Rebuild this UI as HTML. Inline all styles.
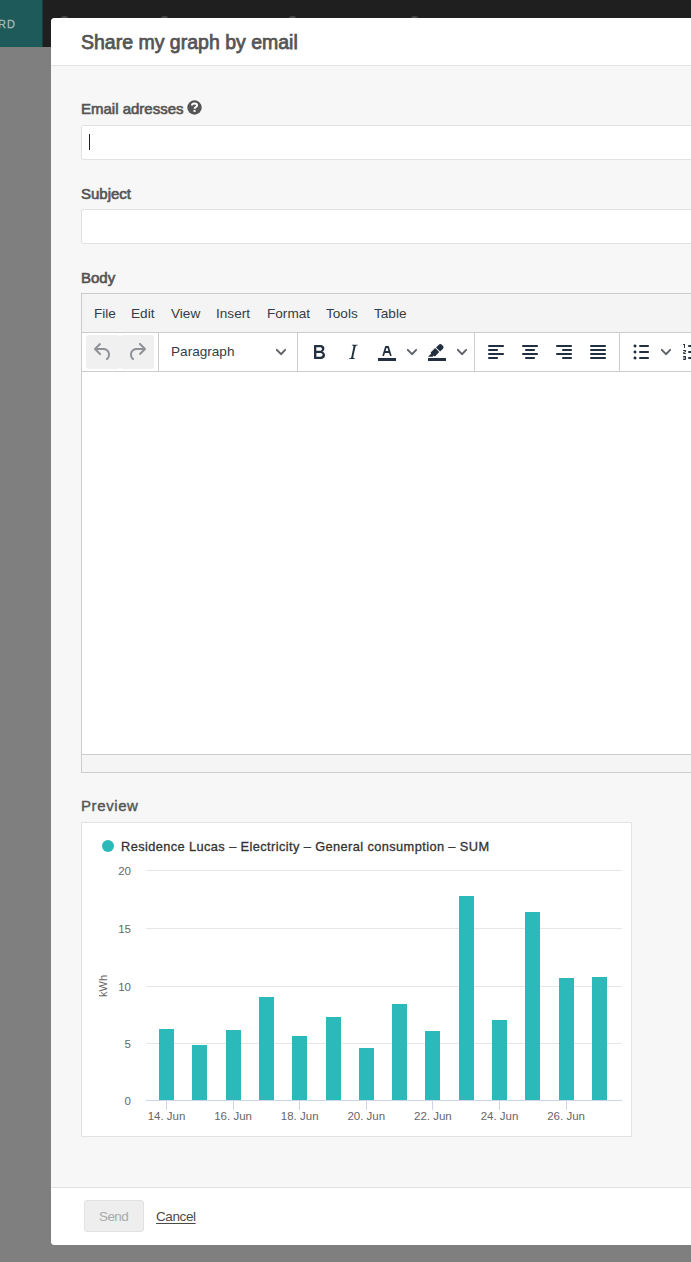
<!DOCTYPE html>
<html><head><meta charset="utf-8">
<style>
*{box-sizing:border-box;margin:0;padding:0}
html,body{width:691px;height:1262px;overflow:hidden;background:#7f7f7f;font-family:"Liberation Sans",sans-serif;position:relative}
.a{position:absolute}
#topbar{left:0;top:0;width:691px;height:47px;background:#1f1f1f}
#teal{left:0;top:0;width:43px;height:47px;background:#1d5a59;border-right:1px solid #173e3e}
#rd{left:-2px;top:18px;font-size:11px;line-height:12px;color:#a3bcbb;letter-spacing:1px;font-weight:normal;-webkit-text-stroke:0.3px #a3bcbb}
#modal{left:51px;top:18px;width:700px;height:1227px;background:#f7f7f7;border-radius:4px;overflow:hidden}
#hdr{left:51px;top:18px;width:700px;height:48px;background:#fff;border-bottom:1px solid #e2e2e8;border-radius:4px 0 0 0}
#title{left:81px;top:32px;font-size:19.5px;line-height:20px;font-weight:normal;-webkit-text-stroke:0.75px #555;color:#555;white-space:nowrap;letter-spacing:0px}
.lbl{font-size:15px;line-height:16px;font-weight:normal;-webkit-text-stroke:0.65px #555;color:#555;white-space:nowrap}
.inp{background:#fff;border:1px solid #e2e2e2;border-radius:2px;width:700px;height:35px;left:81px}
#ftr{left:51px;top:1187px;width:700px;height:58px;background:#fff;border-top:1px solid #e2e2e2;border-radius:0 0 0 4px}
#editor{left:81px;top:293px;width:700px;height:480px;border:1px solid #ccc;background:#fff}
#menubar{left:82px;top:294px;width:700px;height:39px;background:#f4f4f4;border-bottom:1px solid #ccc}
.mi{top:306px;font-size:13.6px;line-height:16px;color:#353c45;white-space:nowrap}
#toolbar{left:82px;top:333px;width:700px;height:39px;background:#fff;border-bottom:1px solid #ccc}
.sep{top:333px;width:1px;height:38px;background:#ccc}
#status{left:82px;top:754px;width:700px;height:18px;background:#f5f5f5;border-top:1px solid #ccc}
.btnbg{top:335px;width:34px;height:34px;background:#f0f0f0;border-radius:3px}
svg.ic{position:absolute;width:24px;height:24px;top:340px;fill:#222f3e}
svg.ch{position:absolute;width:10px;height:10px;top:347px;fill:#5a5e64;stroke:#5a5e64;stroke-width:0.3px}
</style></head>
<body>
<div id="topbar" class="a"></div>
<div id="teal" class="a"></div>
<div id="rd" class="a">RD</div>
<div class="a" style="left:61px;top:16px;width:7px;height:4px;border-radius:50%;background:#4a4a4a"></div>
<div class="a" style="left:161px;top:16px;width:7px;height:4px;border-radius:50%;background:#4a4a4a"></div>
<div class="a" style="left:289px;top:16px;width:7px;height:4px;border-radius:50%;background:#4a4a4a"></div>
<div class="a" style="left:411px;top:16px;width:7px;height:4px;border-radius:50%;background:#4a4a4a"></div>
<div id="modal" class="a"></div>
<div id="hdr" class="a"></div>
<div id="title" class="a">Share my graph by email</div>

<div class="a lbl" style="left:81px;top:101px">Email adresses</div>
<svg class="a" style="left:187px;top:100px" width="15" height="15" viewBox="0 0 15 15"><circle cx="7.5" cy="7.5" r="7.2" fill="#555"/><path d="M5 5.6C5 4.2 6.1 3.4 7.5 3.4S10.1 4.3 10.1 5.5C10.1 6.9 7.6 7.2 7.6 8.7" fill="none" stroke="#fff" stroke-width="2"/><rect x="6.5" y="9.9" width="2.1" height="2" fill="#fff"/></svg>
<div class="a inp" style="top:125px"></div>
<div class="a" style="left:89px;top:134px;width:1px;height:16px;background:#222"></div>
<div class="a lbl" style="left:81px;top:186px">Subject</div>
<div class="a inp" style="top:209px"></div>
<div class="a lbl" style="left:81px;top:270px">Body</div>

<div id="editor" class="a"></div>
<div id="menubar" class="a"></div>
<div class="a mi" style="left:94px">File</div>
<div class="a mi" style="left:131px">Edit</div>
<div class="a mi" style="left:171px">View</div>
<div class="a mi" style="left:216px">Insert</div>
<div class="a mi" style="left:267px">Format</div>
<div class="a mi" style="left:326px">Tools</div>
<div class="a mi" style="left:374px">Table</div>
<div id="toolbar" class="a"></div>
<div class="a sep" style="left:158px"></div>
<div class="a sep" style="left:297px"></div>
<div class="a sep" style="left:474px"></div>
<div class="a sep" style="left:619px"></div>

<div class="a btnbg" style="left:86px"></div>
<div class="a btnbg" style="left:120px"></div>
<svg class="ic" style="left:91px;fill:#8e9196" viewBox="0 0 24 24"><path d="M6.4 8H12c3.7 0 6.2 2 6.8 5.1.6 2.7-.4 5.6-2.3 6.8a1 1 0 0 1-1-1.8c1.1-.6 1.8-2.7 1.4-4.6-.5-2.1-2.1-3.5-4.9-3.5H6.4l3.3 3.3a1 1 0 1 1-1.4 1.4l-5-5a1 1 0 0 1 0-1.4l5-5a1 1 0 0 1 1.4 1.4L6.4 8z"/></svg>
<svg class="ic" style="left:125px;fill:#8e9196" viewBox="0 0 24 24"><path d="M17.6 10H12c-2.8 0-4.4 1.4-4.9 3.5-.4 2 .3 4 1.4 4.6a1 1 0 1 1-1 1.8c-2-1.2-2.9-4.1-2.3-6.8.6-3 3-5.1 6.8-5.1h5.6l-3.3-3.3a1 1 0 1 1 1.4-1.4l5 5a1 1 0 0 1 0 1.4l-5 5a1 1 0 0 1-1.4-1.4l3.3-3.3z"/></svg>
<div class="a mi" style="left:171px;top:344px;font-size:13.6px">Paragraph</div>
<svg class="ch" style="left:276px" viewBox="0 0 10 10"><path d="M8.7 2.2c.3-.3.8-.3 1 0 .4.4.4.9 0 1.2L5.7 7.8c-.3.3-.9.3-1.2 0L.2 3.4a.8.8 0 0 1 0-1.2c.3-.3.8-.3 1.1 0L5 6l3.7-3.8z"/></svg>
<svg class="ic" style="left:307px" viewBox="0 0 24 24"><path d="M7.8 19c-.3 0-.5 0-.6-.2l-.2-.5V5.7c0-.2 0-.4.2-.5l.6-.2h5c1.5 0 2.7.3 3.5 1 .7.6 1.1 1.4 1.1 2.5a3 3 0 0 1-.6 1.9c-.4.6-1 1-1.6 1.2.4.1.9.3 1.300.6s.8.7 1 1.2c.4.4.5 1 .5 1.6 0 1.3-.4 2.300-1.300 3-.8.7-2.100 1-3.800 1H7.8zm5-8.3c.6 0 1.2-.1 1.6-.5.4-.3.6-.7.6-1.3 0-1.1-.8-1.7-2.3-1.7H9.3v3.5h3.4zm.5 6c.7 0 1.3-.1 1.7-.4.4-.4.6-.9.6-1.5s-.2-1-.7-1.4c-.4-.3-1-.4-2-.4H9.4v3.8h4z" fill-rule="evenodd"/></svg>
<svg class="ic" style="left:341px" viewBox="0 0 24 24"><path d="M16.7 4.7l-.1.9h-.3c-.6 0-1 0-1.4.3-.3.3-.4.6-.5 1.1l-2.1 9.8v.6c0 .5.4.8 1.4.8h.2l-.2.8H8l.2-.8h.2c1.1 0 1.8-.5 2-1.5l2-9.8.1-.5c0-.6-.4-.8-1.4-.8h-.3l.2-.9h5.8z" fill-rule="evenodd"/></svg>
<svg class="ic" style="left:375px" viewBox="0 0 24 24"><g fill-rule="evenodd"><path d="M3 18h18v3H3z"/><path d="M8.7 16h-.8a.5.5 0 0 1-.5-.6l2.7-9c.1-.3.3-.4.5-.4h2.8c.2 0 .4.1.5.4l2.7 9a.5.5 0 0 1-.5.6h-.8a.5.5 0 0 1-.4-.4l-.7-2.2c0-.3-.3-.4-.5-.4h-3.4c-.2 0-.4.1-.5.4l-.7 2.2c0 .3-.2.4-.4.4zm2.600-7.600l-.6 2a.5.5 0 0 0 .5.6h1.6a.5.5 0 0 0 .5-.6l-.6-2c0-.3-.3-.4-.5-.4h-.4c-.2 0-.4.1-.5.4z"/></g></svg>
<svg class="ch" style="left:407px" viewBox="0 0 10 10"><path d="M8.7 2.2c.3-.3.8-.3 1 0 .4.4.4.9 0 1.2L5.7 7.8c-.3.3-.9.3-1.2 0L.2 3.4a.8.8 0 0 1 0-1.2c.3-.3.8-.3 1.1 0L5 6l3.7-3.8z"/></svg>
<svg class="ic" style="left:425px" viewBox="0 0 24 24"><g fill-rule="evenodd"><path d="M3 18h18v3H3z"/><path fill-rule="nonzero" d="M7.7 16.7H3l3.3-3.3-.7-.8L10.2 8l4 4.1-4 4.2c-.2.2-.6.2-.8 0l-.6-.7-1.1 1.1zm5-7.5L11 7.4l3-2.9a2 2 0 0 1 2.6 0L18 6c.7.7.7 2 0 2.7l-2.9 2.9-1.8-1.8-.5-.6"/></g></svg>
<svg class="ch" style="left:457px" viewBox="0 0 10 10"><path d="M8.7 2.2c.3-.3.8-.3 1 0 .4.4.4.9 0 1.2L5.7 7.8c-.3.3-.9.3-1.2 0L.2 3.4a.8.8 0 0 1 0-1.2c.3-.3.8-.3 1.1 0L5 6l3.7-3.8z"/></svg>
<svg class="ic" style="left:484px" viewBox="0 0 24 24"><path d="M5 5h14c.6 0 1 .4 1 1s-.4 1-1 1H5a1 1 0 1 1 0-2zm0 4h8c.6 0 1 .4 1 1s-.4 1-1 1H5a1 1 0 1 1 0-2zm0 8h8c.6 0 1 .4 1 1s-.4 1-1 1H5a1 1 0 0 1 0-2zm0-4h14c.6 0 1 .4 1 1s-.4 1-1 1H5a1 1 0 0 1 0-2z"/></svg>
<svg class="ic" style="left:518px" viewBox="0 0 24 24"><path d="M5 5h14c.6 0 1 .4 1 1s-.4 1-1 1H5a1 1 0 1 1 0-2zm3 4h8c.6 0 1 .4 1 1s-.4 1-1 1H8a1 1 0 1 1 0-2zm0 8h8c.6 0 1 .4 1 1s-.4 1-1 1H8a1 1 0 0 1 0-2zm-3-4h14c.6 0 1 .4 1 1s-.4 1-1 1H5a1 1 0 0 1 0-2z"/></svg>
<svg class="ic" style="left:552px" viewBox="0 0 24 24"><path d="M5 5h14c.6 0 1 .4 1 1s-.4 1-1 1H5a1 1 0 1 1 0-2zm6 4h8c.6 0 1 .4 1 1s-.4 1-1 1h-8a1 1 0 0 1 0-2zm0 8h8c.6 0 1 .4 1 1s-.4 1-1 1h-8a1 1 0 0 1 0-2zm-6-4h14c.6 0 1 .4 1 1s-.4 1-1 1H5a1 1 0 0 1 0-2z"/></svg>
<svg class="ic" style="left:586px" viewBox="0 0 24 24"><path d="M5 5h14c.6 0 1 .4 1 1s-.4 1-1 1H5a1 1 0 1 1 0-2zm0 4h14c.6 0 1 .4 1 1s-.4 1-1 1H5a1 1 0 1 1 0-2zm0 4h14c.6 0 1 .4 1 1s-.4 1-1 1H5a1 1 0 0 1 0-2zm0 4h14c.6 0 1 .4 1 1s-.4 1-1 1H5a1 1 0 0 1 0-2z"/></svg>
<svg class="ic" style="left:629px" viewBox="0 0 24 24"><path d="M11 5h8c.6 0 1 .4 1 1s-.4 1-1 1h-8a1 1 0 0 1 0-2zm0 6h8c.6 0 1 .4 1 1s-.4 1-1 1h-8a1 1 0 0 1 0-2zm0 6h8c.6 0 1 .4 1 1s-.4 1-1 1h-8a1 1 0 0 1 0-2zM4.5 6c0-.4.1-.8.4-1 .3-.4.7-.5 1.1-.5.4 0 .8.1 1 .4.4.3.5.7.5 1.1 0 .4-.1.8-.4 1-.3.4-.7.5-1.1.5-.4 0-.8-.1-1-.4-.4-.3-.5-.7-.5-1.1zm0 6c0-.4.1-.8.4-1 .3-.4.7-.5 1.1-.5.4 0 .8.1 1 .4.4.3.5.7.5 1.1 0 .4-.1.8-.4 1-.3.4-.7.5-1.1.5-.4 0-.8-.1-1-.4-.4-.3-.5-.7-.5-1.1zm0 6c0-.4.1-.8.4-1 .3-.4.7-.5 1.1-.5.4 0 .8.1 1 .4.4.3.5.7.5 1.1 0 .4-.1.8-.4 1-.3.4-.7.5-1.1.5-.4 0-.8-.1-1-.4-.4-.3-.5-.7-.5-1.1z"/></svg>
<svg class="ch" style="left:661px" viewBox="0 0 10 10"><path d="M8.7 2.2c.3-.3.8-.3 1 0 .4.4.4.9 0 1.2L5.7 7.8c-.3.3-.9.3-1.2 0L.2 3.4a.8.8 0 0 1 0-1.2c.3-.3.8-.3 1.1 0L5 6l3.7-3.8z"/></svg>
<svg class="ic" style="left:679px" viewBox="0 0 24 24"><path d="M10 17h8c.6 0 1 .4 1 1s-.4 1-1 1h-8a1 1 0 0 1 0-2zm0-6h8c.6 0 1 .4 1 1s-.4 1-1 1h-8a1 1 0 0 1 0-2zm0-6h8c.6 0 1 .4 1 1s-.4 1-1 1h-8a1 1 0 1 1 0-2zM6 4v3.5c0 .3-.2.5-.5.5a.5.5 0 0 1-.5-.5V5h-.5a.5.5 0 0 1 0-1H6zm-1 8.8l.2.2h1.3c.3 0 .5.2.5.5s-.2.5-.5.5H4.9a1 1 0 0 1-.9-1V13c0-.4.3-.8.6-1l1.2-.4.2-.3a.2.2 0 0 0-.2-.2H4.5a.5.5 0 0 1-.5-.5c0-.3.2-.5.5-.5h1.6c.5 0 .9.4.9 1v.1c0 .4-.3.8-.6 1l-1.200.4-.2.3zM7 17v2c0 .6-.4 1-1 1H4.5a.5.5 0 0 1 0-1h1.2c.2 0 .3-.1.3-.3 0-.2-.1-.3-.3-.3H4.4a.4.4 0 1 1 0-.8h1.3c.2 0 .3-.1.3-.3 0-.2-.1-.3-.3-.3H4.5a.5.5 0 1 1 0-1H6c.6 0 1 .4 1 1z" fill-rule="evenodd"/></svg>
<div id="status" class="a"></div>

<div class="a lbl" style="left:81px;top:798px;letter-spacing:0.6px;-webkit-text-stroke:0.4px #555">Preview</div>


<div class="a" style="left:81px;top:822px;width:551px;height:315px;background:#fff;border:1px solid #e3e3e3"></div>
<svg class="a" style="left:0;top:0" width="691" height="1262" viewBox="0 0 691 1262">
<g fill="#e6e6e6"><rect x="146" y="870" width="476" height="1"/><rect x="146" y="928" width="476" height="1"/><rect x="146" y="986" width="476" height="1"/><rect x="146" y="1043" width="476" height="1"/></g>
<rect x="146" y="1100" width="476" height="1" fill="#ccd6eb"/>
<g fill="#ccd6eb"><rect x="166" y="1101" width="1" height="9"/><rect x="233" y="1101" width="1" height="9"/><rect x="299" y="1101" width="1" height="9"/><rect x="366" y="1101" width="1" height="9"/><rect x="432" y="1101" width="1" height="9"/><rect x="499" y="1101" width="1" height="9"/><rect x="566" y="1101" width="1" height="9"/></g>
<g fill="#2cb9b9"><rect x="159" y="1029" width="15" height="71"/><rect x="192" y="1045" width="15" height="55"/><rect x="226" y="1030" width="15" height="70"/><rect x="259" y="997" width="15" height="103"/><rect x="292" y="1036" width="15" height="64"/><rect x="326" y="1017" width="15" height="83"/><rect x="359" y="1048" width="15" height="52"/><rect x="392" y="1004" width="15" height="96"/><rect x="425" y="1031" width="15" height="69"/><rect x="459" y="896" width="15" height="204"/><rect x="492" y="1020" width="15" height="80"/><rect x="525" y="912" width="15" height="188"/><rect x="559" y="978" width="15" height="122"/><rect x="592" y="977" width="15" height="123"/></g>
<circle cx="108" cy="846" r="6" fill="#2cb9b9"/>
<text x="121" y="851" font-family="Liberation Sans" font-size="12.8" letter-spacing="0.4" stroke="#333" stroke-width="0.3" fill="#333">Residence Lucas – Electricity – General consumption – SUM</text>
<g font-family="Liberation Sans" font-size="11.5" fill="#666"><text x="131" y="875" text-anchor="end">20</text><text x="131" y="933" text-anchor="end">15</text><text x="131" y="991" text-anchor="end">10</text><text x="131" y="1048" text-anchor="end">5</text><text x="131" y="1105" text-anchor="end">0</text><text x="166.5" y="1120" text-anchor="middle">14. Jun</text><text x="233.1" y="1120" text-anchor="middle">16. Jun</text><text x="299.7" y="1120" text-anchor="middle">18. Jun</text><text x="366.3" y="1120" text-anchor="middle">20. Jun</text><text x="432.9" y="1120" text-anchor="middle">22. Jun</text><text x="499.5" y="1120" text-anchor="middle">24. Jun</text><text x="566.1" y="1120" text-anchor="middle">26. Jun</text></g>
<text transform="translate(107,986) rotate(-90)" text-anchor="middle" font-family="Liberation Sans" font-size="11" fill="#666">kWh</text>
</svg>
<div id="ftr" class="a"></div>
<div class="a" style="left:84px;top:1200px;width:60px;height:32px;background:#eee;border:1px solid #e2e2e2;border-radius:3px"></div>
<div class="a" style="left:99px;top:1209px;font-size:13.5px;line-height:16px;color:#aaa;letter-spacing:-0.6px">Send</div>
<div class="a" style="left:156px;top:1209px;font-size:13.5px;line-height:16px;color:#4a4a4a;letter-spacing:-0.4px;text-decoration:underline;text-underline-offset:2px">Cancel</div>

</body></html>
